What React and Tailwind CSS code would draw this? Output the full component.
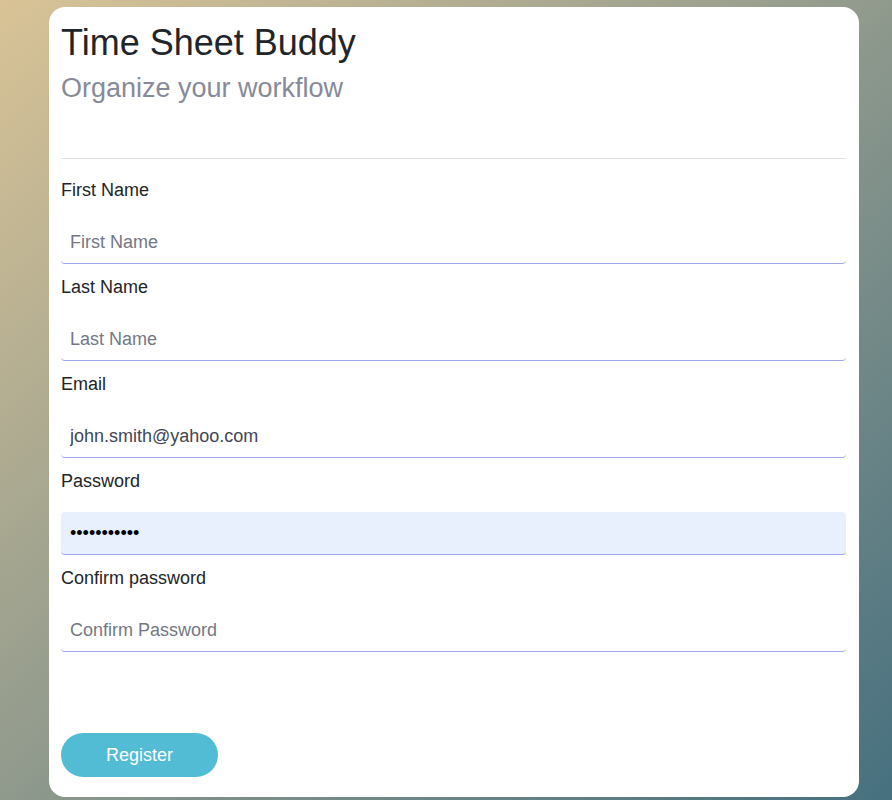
import React from "react";

const font = { fontFamily: '"Liberation Sans", Arial, sans-serif' };

function Field({ label, placeholder, value, type = "text", filled = false }) {
  return (
    <div className="flex flex-col">
      <label className="text-[18px] leading-[27px] text-[#212529]">{label}</label>
      <input
        type={type}
        placeholder={placeholder}
        defaultValue={value}
        readOnly
        className={
          "mt-[17px] mb-[10px] h-[43px] w-full rounded-[4px] border-0 border-b border-solid border-[#9ea6ec] px-[9px] text-[18px] outline-none placeholder:text-[#737885] " +
          (filled ? "bg-[#e8f0fe] text-black" : "bg-white text-[#3f4656]")
        }
        style={font}
      />
    </div>
  );
}

export default function App() {
  return (
    <div
      className="min-h-screen w-full bg-linear-to-br from-[#d9c396] to-[#46707f] pt-[7px] pb-[3px]"
      style={font}
    >
      <div className="ml-[49px] flex h-[790px] w-[810px] flex-col rounded-[16px] bg-white pl-3 pr-[13px] pt-[14px] pb-[20px]">
        <h1 className="text-[36px] leading-[43px] text-[#212529]">Time Sheet Buddy</h1>
        <h2 className="mt-[8px] text-[27px] leading-[33px] text-[#878a99]">Organize your workflow</h2>
        <div className="mt-[53px] h-px w-full bg-[#e2e2e2]" />
        <div className="mt-[18px] flex flex-col">
          <Field label="First Name" placeholder="First Name" />
          <Field label="Last Name" placeholder="Last Name" />
          <Field label="Email" placeholder="Email" value="john.smith@yahoo.com" />
          <Field label="Password" placeholder="Password" type="password" value="abcdefghijk" filled />
          <Field label="Confirm password" placeholder="Confirm Password" type="password" />
        </div>
        <div className="flex-1" />
        <button
          type="button"
          className="h-[44px] w-[157px] rounded-full bg-[#53bcd5] text-[18px] text-white"
          style={font}
        >
          Register
        </button>
      </div>
    </div>
  );
}
